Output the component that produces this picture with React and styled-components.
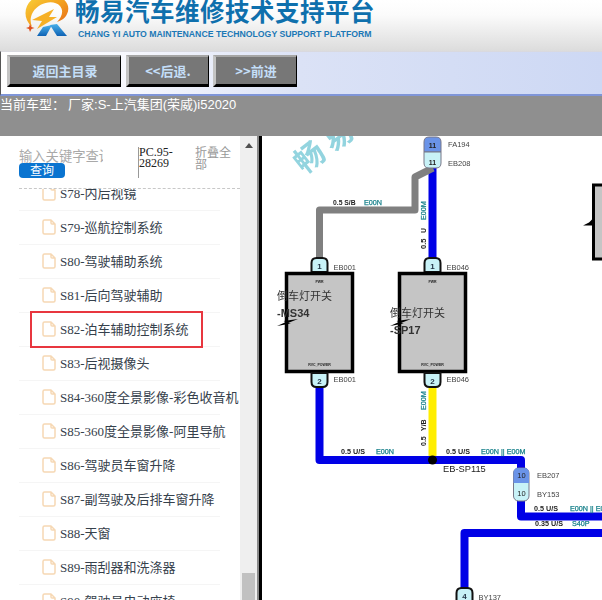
import React from "react"
import styled, { createGlobalStyle } from "styled-components"

const GlobalStyle = createGlobalStyle`
  html, body {
    margin: 0;
    padding: 0;
    height: 600px;
    overflow: hidden;
    background: #fff;
    font-family: "Liberation Serif", "Noto Sans CJK SC", serif;
  }
`

const Page = styled.div`
  width: 602px;
  height: 600px;
  display: flex;
  flex-direction: column;
  overflow: hidden;
`

const Banner = styled.header`
  height: 51px;
  flex: none;
  display: flex;
  background: linear-gradient(#ffffff 0, #fbfbfb 15px, #dcdcdc 51px);
  padding-left: 24px;
  overflow: hidden;
`

const BannerText = styled.div`
  display: flex;
  flex-direction: column;
  padding-left: 5px;
`

const BannerTitle = styled.div`
  font-family: "Noto Sans CJK SC", sans-serif;
  font-weight: 700;
  font-size: 24.5px;
  letter-spacing: 0.5px;
  line-height: 26px;
  margin-top: -2px;
  color: #0f70ad;
  white-space: nowrap;
`

const BannerSub = styled.div`
  font-family: "Liberation Sans", sans-serif;
  font-weight: 700;
  font-size: 8.7px;
  line-height: 11px;
  margin-top: 5px;
  padding-left: 3px;
  color: #1b78b6;
  white-space: nowrap;
`

const Toolbar = styled.nav`
  height: 45px;
  flex: none;
  display: flex;
  align-items: flex-start;
  gap: 4.5px;
  padding: 3px 0 0 6px;
  box-sizing: border-box;
  background: linear-gradient(90deg, #ffffff 0, #f6f7fd 130px, #dbe2f6 300px, #cdd8f4 602px);
  border-top: 1px solid #d9d9df;
  border-bottom: 2px solid #7f95d8;
  border-left: 1px solid #555;
`

const NavButton = styled.div`
  width: ${p => p.$w}px;
  height: 32px;
  box-sizing: border-box;
  display: flex;
  align-items: center;
  justify-content: center;
  background: #777;
  border-style: solid;
  border-width: 2px 1px 3px 3px;
  border-color: #a6a6a6 #000 #000 #c4c4c4;
  color: #c4def8;
  font-family: "Noto Sans CJK SC", sans-serif;
  font-weight: 700;
  font-size: 13px;
`

const CarBar = styled.div`
  height: 40px;
  flex: none;
  background: #8f8f8f;
  color: #fff;
  font-family: "Liberation Sans", "Noto Sans CJK SC", sans-serif;
  font-size: 13px;
  line-height: 18px;
  white-space: nowrap;
`

const CarLabel = styled.span`
  margin-right: 3px;
`

const Body = styled.main`
  flex: 1;
  min-height: 0;
  display: flex;
`

const Sidebar = styled.aside`
  width: 240px;
  flex: none;
  display: flex;
  flex-direction: column;
  box-sizing: border-box;
  overflow: hidden;
`

const SearchBar = styled.div`
  height: 53px;
  flex: none;
  display: flex;
  position: relative;
  z-index: 1;
  box-sizing: border-box;
  margin-left: 19px;
  padding-top: 11px;
  background: #fff;
  border-bottom: 1px dashed #c8c8c8;
`

const SearchBox = styled.div`
  width: 119px;
  flex: none;
  display: flex;
  flex-direction: column;
`

const SearchHint = styled.div`
  width: 84px;
  height: 16px;
  overflow: hidden;
  white-space: nowrap;
  color: #a9a9a9;
  font-size: 13.3px;
  line-height: 17px;
  font-family: "Noto Sans CJK SC", sans-serif;
`

const SearchButton = styled.div`
  width: 46px;
  height: 15px;
  background: #0a74d0;
  border-radius: 4px;
  color: #fff;
  font-size: 12px;
  line-height: 14px;
  text-align: center;
  font-family: "Noto Sans CJK SC", sans-serif;
`

const PartCode = styled.div`
  width: 56px;
  height: 31px;
  flex: none;
  box-sizing: border-box;
  border-left: 1px solid #999;
  color: #222;
  font-size: 12px;
  line-height: 11px;
`

const Collapse = styled.div`
  width: 38px;
  margin: -1px 0 0 1px;
  color: #999;
  font-size: 12px;
  line-height: 12px;
  font-family: "Noto Sans CJK SC", sans-serif;
`

const Tree = styled.ul`
  list-style: none;
  margin: -12px 0 0;
  padding: 0 0 0 19px;
  flex: 1;
  min-height: 0;
  overflow: hidden;
`

const TreeRow = styled.li`
  width: 201px;
  height: 34px;
  padding: 0 0 2px 23px;
  box-sizing: border-box;
  display: flex;
  align-items: center;
  gap: 4px;
  position: relative;
  border-bottom: 1px solid #f5f5f5;
  font-size: 13px;
  white-space: nowrap;
  color: #36414c;
  font-family: "Liberation Serif", "Noto Sans CJK SC", serif;

  ${p => p.$active && `
    &::after {
      content: "";
      position: absolute;
      left: 11px;
      top: -2px;
      width: 173px;
      height: 37px;
      box-sizing: border-box;
      border: 2.5px solid #e8363f;
    }
  `}
`

const Scrollbar = styled.div`
  width: 19px;
  flex: none;
  background: #efefef;
  position: relative;
  border-right: 2px solid #8a8a8a;
  box-sizing: border-box;
`

const ScrollThumb = styled.div`
  position: absolute;
  left: 2px;
  right: 2px;
  top: 437px;
  bottom: 0;
  background: #c1c1c1;
`

const ScrollArrow = styled.div`
  position: absolute;
  left: 5px;
  top: 7px;
  border-left: 4px solid transparent;
  border-right: 4px solid transparent;
  border-bottom: 5px solid #505050;
`

const Diagram = styled.section`
  flex: 1;
  min-width: 0;
  border-left: 3px solid #000;
  overflow: hidden;
  background: #fff;
`

const DiagramSvg = styled.svg`
  display: block;
  filter: blur(0.45px);
`

const rows = [
  "S78-内后视镜", "S79-巡航控制系统", "S80-驾驶辅助系统", "S81-后向驾驶辅助",
  "S82-泊车辅助控制系统", "S83-后视摄像头", "S84-360度全景影像-彩色收音机",
  "S85-360度全景影像-阿里导航", "S86-驾驶员车窗升降", "S87-副驾驶及后排车窗升降",
  "S88-天窗", "S89-雨刮器和洗涤器", "S90-驾驶员电动座椅",
]

const FileIcon = () => (
  <svg width="14" height="16" viewBox="0 0 14 16" style={{ flex: "none" }}>
    <path d="M2.500 1h6.500l4 4v8.500q0 1.500 -1.500 1.500h-9q-1.500 0 -1.500 -1.500v-11q0 -1.500 1.500 -1.500z M9 1v3q0 1 1 1h3" fill="none" stroke="#f6d8b4" strokeWidth="1.500" strokeLinejoin="round" />
  </svg>
)

const Logo = () => (
  <svg width="46" height="40" viewBox="0 0 46 40" style={{ flex: "none" }}>
    <defs>
      <linearGradient id="sw" x1="0" y1="0" x2="1" y2="1">
        <stop offset="0" stopColor="#f9d63c" />
        <stop offset="0.55" stopColor="#f3a01e" />
        <stop offset="1" stopColor="#e4651a" />
      </linearGradient>
      <linearGradient id="rr" x1="0" y1="0" x2="0" y2="1">
        <stop offset="0" stopColor="#49b0ea" />
        <stop offset="1" stopColor="#0f62b4" />
      </linearGradient>
    </defs>
    <path d="M8 27C-6 14 4 -6 24 -6C38 -6 48 4 43 14C41 19 36 21 33 22C38 17 40 11 36 6C30 -1 15 2 9 12C6 17 6 22 8 27Z" fill="url(#sw)" />
    <path d="M8 20L30 9L25 17L33 17L13 29L18 21Z" fill="#f6b026" />
    <path d="M6 24l1.500 3l3 1l-3 1l-1.500 3l-1 -3l-3 -1l3 -1z" fill="#dd4f1e" />
    <path d="M13 36L19 27L28 25L22 36Z" fill="url(#rr)" />
    <path d="M26 25L33 24L43 36L33 36Z" fill="url(#rr)" />
  </svg>
)

const Txt = ({ x, y, size = 7, bold, fill = "#222", anchor, rot, children }) => (
  <text
    x={x}
    y={y}
    fontSize={size}
    fontWeight={bold ? 700 : 400}
    fill={fill}
    textAnchor={anchor}
    fontFamily='"Liberation Sans", "Noto Sans CJK SC", sans-serif'
    transform={rot ? `rotate(${rot} ${x} ${y})` : undefined}
  >
    {children}
  </text>
)

// the circuit codes, teal and a little heavier than regular
const Code = props => (
  <g stroke="#17808a" strokeWidth="0.25">
    <Txt size={7.200} fill="#17808a" {...props} />
  </g>
)

const Pin = ({ x, y, n, up = true, label }) => (
  <g>
    <path
      d={up
        ? `M${x - 8} ${y + 14}v-9q0 -5 5 -5h6q5 0 5 5v9z`
        : `M${x - 8} ${y}v9q0 5 5 5h6q5 0 5 -5v-9z`}
      fill="#c8f2f7"
      stroke="#111"
      strokeWidth="2"
    />
    <Txt x={x} y={y + 11} anchor="middle" size={8} bold fill="#234">{n}</Txt>
    {label && <Txt x={x + 14} y={y + (up ? 12 : 9)} size={7.500} fill="#444">{label}</Txt>}
  </g>
)

const Switch = ({ x, y, name, code, tx, ty, lx }) => (
  <g>
    <rect x={x} y={y} width="66" height="98" fill="#c5c5c5" stroke="#000" strokeWidth="3.500" />
    <Txt x={x + 33} y={y + 9} size={3.500} anchor="middle" bold>PWR</Txt>
    <Txt x={x + 33} y={y + 92} size={3.500} anchor="middle" bold>RVC_POWER</Txt>
    <path d={`M${lx} 326l9 -4l-2.500 -1l14.500 -2l-10 4l3 0.500z`} fill="#000" />
    <Txt x={tx} y={ty} size={11} fill="#333">{name}</Txt>
    <Txt x={tx} y={ty + 17} size={11} bold fill="#333">{code}</Txt>
  </g>
)

// the wiring picture, in page coordinates
const WiringDiagram = () => (
  <DiagramSvg width="340" height="464" viewBox="262 136 340 464">
    <g transform="translate(310 158) rotate(-38)" opacity="0.75">
      <text x="-15" y="10" fontSize="30" letterSpacing="6" fontWeight="700" fill="#6fc6d4" fontFamily='"Noto Sans CJK SC", sans-serif'>畅易</text>
    </g>

    <path d="M432.500 168V260" stroke="#0000e6" strokeWidth="8" fill="none" />
    <path d="M319.500 260V210H415V177L433 168" stroke="#808080" strokeWidth="7" fill="none" strokeLinejoin="round" />
    <path d="M319.500 380V460H432.500" stroke="#0000e6" strokeWidth="8" fill="none" strokeLinejoin="round" />
    <path d="M432.500 380V456" stroke="#ffee00" strokeWidth="8" fill="none" />
    <path d="M432.500 460H521V516.500H602" stroke="#0000e6" strokeWidth="8" fill="none" strokeLinejoin="round" />
    <path d="M464.500 592V533H602" stroke="#0000e6" strokeWidth="8" fill="none" strokeLinejoin="round" />
    <circle cx="432.500" cy="460" r="4.500" fill="#000" />

    <path d="M424 152v-10q0 -5 5 -5h7q5 0 5 5v10z" fill="#6a93e8" stroke="#778" strokeWidth="1" />
    <path d="M424 152v11q0 5 5 5h7q5 0 5 -5v-11z" fill="#c8f2f7" stroke="#778" strokeWidth="1" />
    <Txt x={432.500} y={148} size={7} anchor="middle" bold>11</Txt>
    <Txt x={432.500} y={165} size={7} anchor="middle" bold>11</Txt>
    <Txt x={448} y={147} size={7.500} fill="#444">FA194</Txt>
    <Txt x={448} y={166} size={7.500} fill="#444">EB208</Txt>

    <Txt x={333} y={204.500} size={6.800} bold>0.5 S/B</Txt>
    <Code x={364} y={204.500}>E00N</Code>
    <Txt x={425.500} y={249} size={7.500} bold rot={-90}>0.5</Txt>
    <Txt x={425.500} y={233} size={7} bold rot={-90}>U</Txt>
    <Code x={425.500} y={220} rot={-90}>E00M</Code>

    <Pin x={319.500} y={258} n="1" label="EB001" />
    <Pin x={432.500} y={258} n="1" label="EB046" />

    <Switch x={286.500} y={273.500} name="倒车灯开关" code="-MS34" tx={277} ty={300} lx={277} />
    <Switch x={399.500} y={273.500} name="倒车灯开关" code="-SP17" tx={390} ty={317} lx={390} />

    <Pin x={319.500} y={373} n="2" up={false} label="EB001" />
    <Pin x={432.500} y={373} n="2" up={false} label="EB046" />

    <Txt x={425.500} y={446} size={7} bold rot={-90}>0.5</Txt>
    <Txt x={425.500} y={431} size={7} bold rot={-90}>Y/B</Txt>
    <Code x={425.500} y={410} rot={-90}>E00M</Code>
    <Txt x={341} y={453.500} size={7.200} bold>0.5 U/S</Txt>
    <Code x={376} y={453.500}>E00N</Code>
    <Txt x={446} y={453.500} size={7.200} bold>0.5 U/S</Txt>
    <Code x={481} y={453.500}>E00N || E00M</Code>
    <Txt x={443} y={472} size={9.300} fill="#222">EB-SP115</Txt>

    <rect x="513.500" y="468" width="15.500" height="33" rx="5" fill="#c8f2f7" stroke="#778" />
    <path d="M513.500 483v-10q0 -5 5 -5h5.500q5 0 5 5v10z" fill="#6a93e8" />
    <Txt x={521.500} y={478} size={7.500} anchor="middle">10</Txt>
    <Txt x={521.500} y={495.500} size={7.500} anchor="middle">10</Txt>
    <Txt x={537} y={478} size={7.500} fill="#444">EB207</Txt>
    <Txt x={537} y={497} size={7.500} fill="#444">BY153</Txt>

    <Txt x={534} y={510.500} size={7.200} bold>0.5 U/S</Txt>
    <Code x={570} y={510.500}>E00N || E00M</Code>
    <Txt x={535} y={525.500} size={7.200} bold>0.35 U/S</Txt>
    <Code x={572} y={525.500}>S40P</Code>

    <Pin x={464.500} y={588} n="4" label="BY137" />

    <rect x="593.500" y="185" width="12" height="74" fill="#c5c5c5" stroke="#000" strokeWidth="3" />
    <path d="M583 225.500l6 -3l3 -3v6z" fill="#000" />
  </DiagramSvg>
)

export default function App() {
  return (
    <Page>
      <GlobalStyle />
      <Banner>
        <Logo />
        <BannerText>
          <BannerTitle>畅易汽车维修技术支持平台</BannerTitle>
          <BannerSub>CHANG YI AUTO MAINTENANCE TECHNOLOGY SUPPORT PLATFORM</BannerSub>
        </BannerText>
      </Banner>
      <Toolbar>
        <NavButton $w={114}>返回主目录</NavButton>
        <NavButton $w={83}>&lt;&lt;后退.</NavButton>
        <NavButton $w={84}>&gt;&gt;前进</NavButton>
      </Toolbar>
      <CarBar><CarLabel>当前车型：</CarLabel>厂家:S-上汽集团(荣威)i52020</CarBar>
      <Body>
        <Sidebar>
          <SearchBar>
            <SearchBox>
              <SearchHint>输入关键字查询</SearchHint>
              <SearchButton>查询</SearchButton>
            </SearchBox>
            <PartCode>PC.95-28269</PartCode>
            <Collapse>折叠全部</Collapse>
          </SearchBar>
          <Tree>
            {rows.map(r => (
              <TreeRow key={r} $active={r.startsWith("S82")}><FileIcon />{r}</TreeRow>
            ))}
          </Tree>
        </Sidebar>
        <Scrollbar>
          <ScrollArrow />
          <ScrollThumb />
        </Scrollbar>
        <Diagram>
          <WiringDiagram />
        </Diagram>
      </Body>
    </Page>
  )
}
